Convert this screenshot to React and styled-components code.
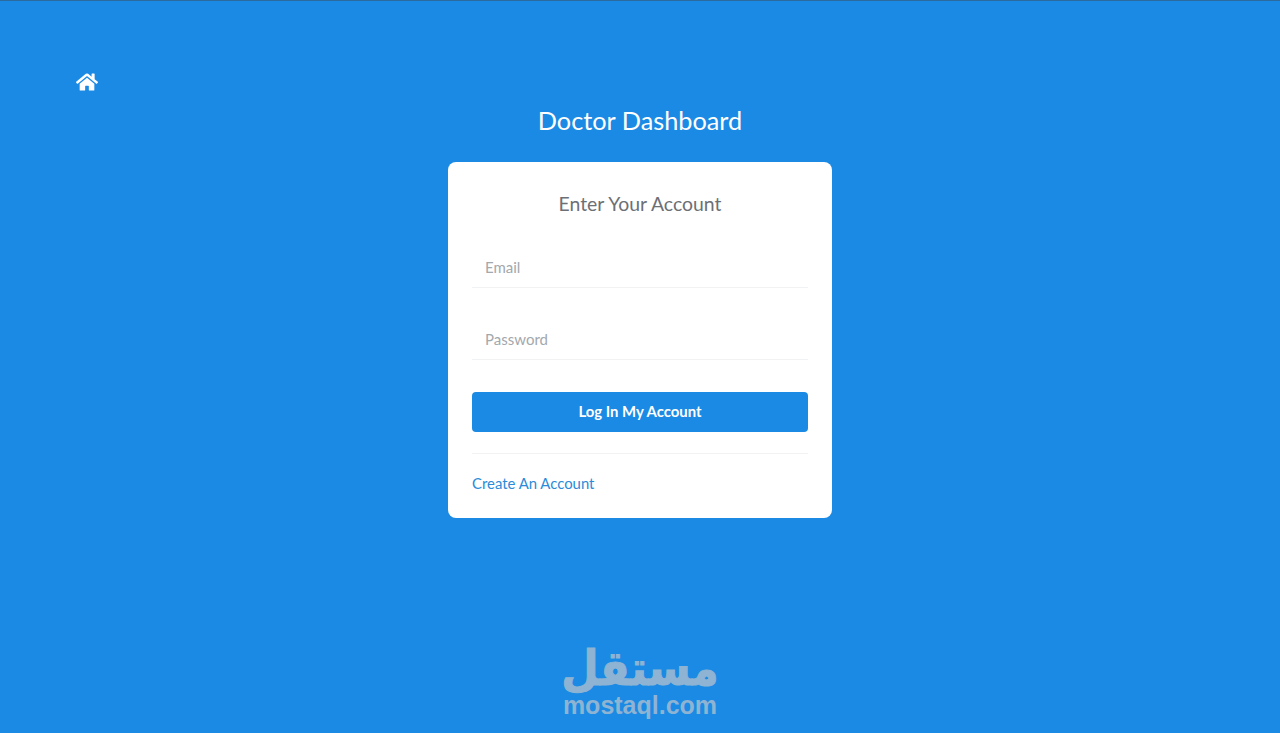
import styled, { createGlobalStyle } from "styled-components";
import { FaHome } from "react-icons/fa";

const GlobalStyle = createGlobalStyle`
  html, body {
    margin: 0;
    height: 100%;
    background: #1a8ae4;
    font-family: "Lato", "Open Sans", sans-serif;
  }
  * { box-sizing: border-box; }
`;

const Page = styled.div`
  position: relative;
  height: 733px;
  overflow: hidden;
  padding-top: 70px;
  background: #1a8ae4;
  border-top: 1px solid #2a6a9e;
`;

const HomeLink = styled.a`
  display: block;
  width: 22px;
  height: 19px;
  margin-left: 76px;
  color: #fff;
  font-size: 22px;
  line-height: 0;
`;

const Title = styled.h1`
  margin: 12px 0 0;
  height: 36px;
  color: #fff;
  font-size: 25.3px;
  font-weight: 400;
  line-height: 36px;
  text-align: center;
`;

const Card = styled.form`
  width: 384px;
  height: 356px;
  margin: 24px auto 0;
  padding: 30px 24px 0;
  background: #fff;
  border-radius: 8px;
`;

const CardTitle = styled.h2`
  margin: 0 0 32px;
  color: #6c7075;
  font-size: 19.4px;
  font-weight: 400;
  line-height: 24px;
  text-align: center;
`;

const Field = styled.input`
  display: block;
  width: 100%;
  height: 40px;
  margin-top: ${(p) => p.$gap}px;
  padding: 0 13px 2px;
  border: 0;
  border-bottom: 1px solid #f0f2f3;
  outline: none;
  background: transparent;
  font: 400 15px "Lato", sans-serif;

  &::placeholder {
    color: #a3a8ad;
    opacity: 1;
  }
`;

const Submit = styled.button`
  display: block;
  width: 100%;
  height: 40px;
  margin-top: 32px;
  padding: 0 0 2px;
  border: 0;
  border-radius: 4px;
  background: #1a8ae4;
  color: #fff;
  font: 700 14.9px "Lato", sans-serif;
`;

const Divider = styled.hr`
  height: 1px;
  margin: 21px 0 0;
  border: 0;
  background: #f1f2f3;
`;

const CreateLink = styled.a`
  display: block;
  margin-top: 19px;
  color: #2a8bd8;
  font-size: 14.9px;
  line-height: 20px;
  text-decoration: none;
`;

const Watermark = styled.div`
  position: absolute;
  left: 0;
  right: 0;
  bottom: 16px;
  display: flex;
  flex-direction: column;
  align-items: center;
  color: #8fb3d3;
`;

const WatermarkArabic = styled.div`
  height: 52px;
  font-family: "DejaVu Sans", sans-serif;
  font-size: 43px;
  font-weight: 700;
  line-height: 52px;
  -webkit-text-stroke: 1px #8fb3d3;
  transform: translateY(4px) scaleY(1.12);
  transform-origin: 50% 100%;
`;

const WatermarkLatin = styled.div`
  font-family: "Liberation Sans", sans-serif;
  font-size: 25px;
  font-weight: 700;
  line-height: 24px;
`;

export default function App() {
  return (
    <Page>
      <GlobalStyle />
      <HomeLink href="#">
        <FaHome />
      </HomeLink>
      <Title>Doctor Dashboard</Title>
      <Card>
        <CardTitle>Enter Your Account</CardTitle>
        <Field $gap={0} type="email" placeholder="Email" />
        <Field $gap={32} type="password" placeholder="Password" />
        <Submit type="button">Log In My Account</Submit>
        <Divider />
        <CreateLink href="#">Create An Account</CreateLink>
      </Card>
      <Watermark>
        <WatermarkArabic>مستقل</WatermarkArabic>
        <WatermarkLatin>mostaql.com</WatermarkLatin>
      </Watermark>
    </Page>
  );
}
